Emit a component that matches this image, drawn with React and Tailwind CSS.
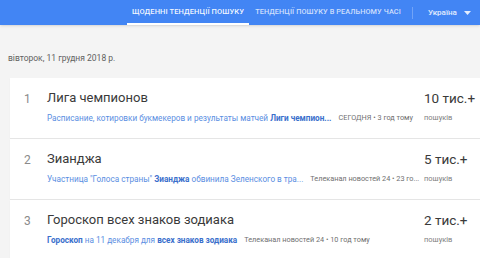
import React from 'react';

const trends = [
  {
    rank: 1,
    title: 'Лига чемпионов',
    snippet: [
      { t: 'Расписание, котировки букмекеров и результаты матчей ', b: false },
      { t: 'Лиги чемпион...', b: true },
    ],
    source: 'СЕГОДНЯ • 3 год тому',
    count: '10 тис.+',
  },
  {
    rank: 2,
    title: 'Зианджа',
    snippet: [
      { t: 'Участница "Голоса страны" ', b: false },
      { t: 'Зианджа', b: true },
      { t: ' обвинила Зеленского в тра...', b: false },
    ],
    source: 'Телеканал новостей 24 • 23 го...',
    count: '5 тис.+',
  },
  {
    rank: 3,
    title: 'Гороскоп всех знаков зодиака',
    snippet: [
      { t: 'Гороскоп', b: true },
      { t: ' на 11 декабря для ', b: false },
      { t: 'всех знаков зодиака', b: true },
    ],
    source: 'Телеканал новостей 24 • 10 год тому',
    count: '2 тис.+',
  },
];

const App = () => {
  return (
    <div className="w-[480px] h-[258px] overflow-hidden bg-[#f4f4f4] font-['Roboto',sans-serif]">
      <div className="h-[25px] bg-[#4285f4] flex items-stretch shadow-sm">
        <div className="ml-[127px] w-[122px] flex items-center justify-center border-b-[2px] border-white text-[7.5px] font-medium text-white/95 tracking-[0.1px] pt-[1px]">
          ЩОДЕННІ ТЕНДЕНЦІЇ ПОШУКУ
        </div>
        <div className="w-[158px] flex items-center justify-center text-[7.3px] font-medium text-white/75 tracking-[0.1px]">
          ТЕНДЕНЦІЇ ПОШУКУ В РЕАЛЬНОМУ ЧАСІ
        </div>
        <div className="flex items-center">
          <div className="w-px h-[12px] bg-white/25 ml-[5px]" />
          <span className="ml-[15px] text-[8px] font-medium text-white/85">Україна</span>
          <svg className="ml-[7px]" width="7" height="4" viewBox="0 0 7 4">
            <path d="M0 0 L7 0 L3.5 4 Z" fill="rgba(255,255,255,0.85)" />
          </svg>
        </div>
      </div>

      <div className="pl-[8px] pt-[27px] text-[8.5px] text-[#616161] h-[53px]">
        вівторок, 11 грудня 2018 р.
      </div>

      <div className="ml-[10px] flex flex-col gap-[1px]">
        {trends.map((r) => (
          <div key={r.rank} className="bg-white h-[60px] flex items-start shadow-[0_1px_1px_rgba(0,0,0,0.06)]">
            <div className="w-[37px] pt-[12px] pl-[14px] text-[12px] text-[#8a8a8a]">{r.rank}</div>
            <div className="flex-1 pt-[11px] min-w-0">
              <div className="text-[13px] font-normal text-[#3a3a3a] leading-[18px]">{r.title}</div>
              <div className="mt-[5px] flex items-center whitespace-nowrap">
                <span className="text-[8.2px] text-[#5a8ee2]">
                  {r.snippet.map((s, i) => (
                    <span key={i} className={s.b ? 'font-bold text-[#3a6fcc]' : ''}>{s.t}</span>
                  ))}
                </span>
                <span className="ml-[7px] text-[#6f6f6f] text-[7.3px]">{r.source}</span>
              </div>
            </div>
            <div className="w-[56px] pt-[11px]">
              <div className="text-[13.5px] text-[#3a3a3a] leading-[18px]">{r.count}</div>
              <div className="mt-[5px] text-[7.5px] text-[#808080]">пошуків</div>
            </div>
          </div>
        ))}
      </div>
    </div>
  );
};

export default App;
